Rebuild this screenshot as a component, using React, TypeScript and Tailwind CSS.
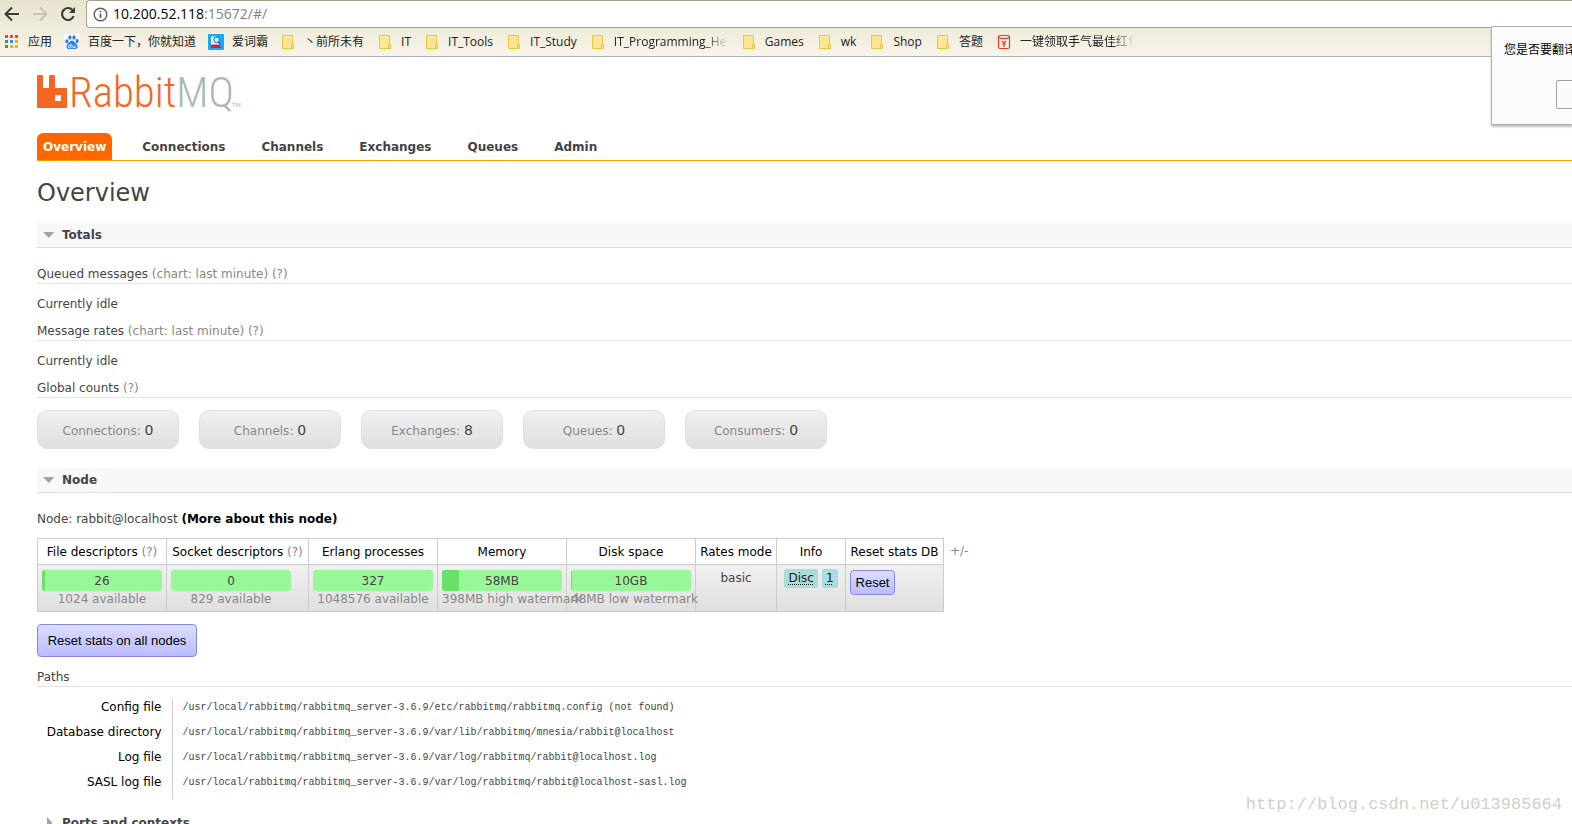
import React from 'react'

type IconKind = 'apps' | 'baidu' | 'iciba' | 'folder' | 'packet'

interface Bookmark {
  label: string
  icon: IconKind
  faded?: boolean
}

const bookmarks: Bookmark[] = [
  { label: '应用', icon: 'apps' },
  { label: '百度一下，你就知道', icon: 'baidu' },
  { label: '爱词霸', icon: 'iciba' },
  { label: '丶前所未有', icon: 'folder' },
  { label: 'IT', icon: 'folder' },
  { label: 'IT_Tools', icon: 'folder' },
  { label: 'IT_Study', icon: 'folder' },
  { label: 'IT_Programming_He', icon: 'folder', faded: true },
  { label: 'Games', icon: 'folder' },
  { label: 'wk', icon: 'folder' },
  { label: 'Shop', icon: 'folder' },
  { label: '答题', icon: 'folder' },
  { label: '一键领取手气最佳红包', icon: 'packet', faded: true }
]

const tabs = ['Overview', 'Connections', 'Channels', 'Exchanges', 'Queues', 'Admin']

const counts = [
  { label: 'Connections', value: 0 },
  { label: 'Channels', value: 0 },
  { label: 'Exchanges', value: 8 },
  { label: 'Queues', value: 0 },
  { label: 'Consumers', value: 0 }
]

const nodeStats = [
  { value: '26', note: '1024 available', used: 2.5 },
  { value: '0', note: '829 available', used: 0 },
  { value: '327', note: '1048576 available', used: 0 },
  { value: '58MB', note: '398MB high watermark', used: 14 },
  { value: '10GB', note: '48MB low watermark', used: 0.6 }
]

const paths = [
  { name: 'Config file', path: '/usr/local/rabbitmq/rabbitmq_server-3.6.9/etc/rabbitmq/rabbitmq.config (not found)' },
  { name: 'Database directory', path: '/usr/local/rabbitmq/rabbitmq_server-3.6.9/var/lib/rabbitmq/mnesia/rabbit@localhost' },
  { name: 'Log file', path: '/usr/local/rabbitmq/rabbitmq_server-3.6.9/var/log/rabbitmq/rabbit@localhost.log' },
  { name: 'SASL log file', path: '/usr/local/rabbitmq/rabbitmq_server-3.6.9/var/log/rabbitmq/rabbit@localhost-sasl.log' }
]

const appColors = ['#e8453c', '#e8453c', '#e8453c', '#2e9e5b', '#2f8cf0', '#f5b400', '#2e9e5b', '#f5b400', '#f5b400']

const BookmarkIcon = ({ kind }: { kind: IconKind }) => {
  switch (kind) {
    case 'apps':
      return (
        <svg width="16" height="16" viewBox="0 0 16 16" className="shrink-0">
          {appColors.map((color, i) => (
            <rect key={i} x={1 + (i % 3) * 5} y={1 + Math.floor(i / 3) * 5} width="3" height="3" fill={color} />
          ))}
        </svg>
      )
    case 'baidu':
      return (
        <svg width="16" height="16" viewBox="0 0 16 16" className="shrink-0 bg-white" fill="#2f7de1">
          <ellipse cx="2.9" cy="7.3" rx="1.6" ry="2.1" />
          <ellipse cx="5.9" cy="3.5" rx="1.6" ry="2.2" />
          <ellipse cx="10" cy="3.5" rx="1.6" ry="2.2" />
          <ellipse cx="13.1" cy="7.1" rx="1.6" ry="2.1" />
          <path d="M8 6.6c1.8 0 2.4 1.6 3.6 2.7 1.2 1 2.3 2 2 3.8-.3 2-2 2.4-3.4 2.1-1.5-.2-2.9-.2-4.4 0-1.5.3-3.1-.1-3.4-2.1-.3-1.7.8-2.8 2-3.8C5.6 8.2 6.2 6.6 8 6.6z" />
          <path d="M7 9.600v4.200H5.400a1.200 1.200 0 010-2.500H7M8.900 11.300v2.300h2.300v-2.300" fill="none" stroke="#fff" strokeWidth=".9" />
        </svg>
      )
    case 'iciba':
      return (
        <svg width="16" height="16" viewBox="0 0 16 16" className="shrink-0">
          <rect width="16" height="16" rx="1" fill="#16aaf0" />
          <path d="M3 2.500h5l3 5.500v4H3z" fill="#fff" />
          <path d="M3.500 10.500h7l3 3.500H4c-1.200 0-1.800-2.500-.5-3.500z" fill="#e8123c" />
          <circle cx="8.600" cy="5.800" r="2.700" fill="#e4f4fd" stroke="#1a8fe8" strokeWidth="1.200" />
          <path d="M10.200 8l2 2.500" stroke="#1a6fe0" strokeWidth="1.500" />
        </svg>
      )
    case 'packet':
      return (
        <svg width="16" height="16" viewBox="0 0 16 16" className="shrink-0" fill="none" stroke="#e23e2b" strokeWidth="1.200">
          <rect x="2.500" y="1.500" width="11" height="13" rx="1.500" />
          <path d="M2.500 3.200c3 2 8 2 11 0" />
          <path d="M6 7l2 2 2-2M8 9v4M6 10h4" />
        </svg>
      )
    default:
      return (
        <svg width="16" height="16" viewBox="0 0 16 16" className="shrink-0" fill="#ffe694" stroke="#e9c446">
          <path d="M2.500 1.500h10v13h-10z" />
          <path d="M11.500 14.500v-4h2v4z" />
        </svg>
      )
  }
}

const BrowserBar = () => (
  <header className="border-b border-[#b0b0b0] bg-linear-to-b from-[#e7e3cd] to-[#f7f4e8] font-['Open_Sans','Noto_Sans_CJK_SC',sans-serif]">
    <div className="flex h-7 items-center">
      <button className="pl-1" aria-label="Back">
        <svg width="16" height="16" viewBox="0 0 16 16" fill="none" stroke="#3c3c3c" strokeWidth="2">
          <path d="M15 8H2.500M8 1.500L1.500 8 8 14.500" />
        </svg>
      </button>
      <button className="pl-3" aria-label="Forward">
        <svg width="16" height="16" viewBox="0 0 16 16" fill="none" stroke="#c6c3b3" strokeWidth="2">
          <path d="M1 8h12.500M8 1.500L14.500 8 8 14.500" />
        </svg>
      </button>
      <button className="pl-3" aria-label="Reload">
        <svg width="16" height="16" viewBox="0 0 16 16" fill="none" stroke="#3c3c3c" strokeWidth="2.200">
          <path d="M13.600 10.200A6 6 0 1 1 12.500 4" />
          <path d="M15 1v6H9z" fill="#3c3c3c" stroke="none" />
        </svg>
      </button>
      <div className="ml-[10px] flex h-7 flex-1 items-center gap-[5px] rounded-l-sm border border-r-0 border-[#a3a08e] bg-white pl-[6px]">
        <svg width="15" height="15" viewBox="0 0 15 15" fill="none" stroke="#5c5c5c" strokeWidth="1.400">
          <circle cx="7.500" cy="7.500" r="6.300" />
          <path d="M7.500 6.500v4.500M7.500 3.800v1.500" strokeWidth="1.700" />
        </svg>
        <span className="text-sm leading-5 text-black">
          10.200.52.118<span className="text-[#808080]">:15672/#/</span>
        </span>
      </div>
    </div>
    <nav className="flex h-7 items-center gap-3 pl-1 text-xs text-[#222]">
      {bookmarks.map((item) => (
        <a
          key={item.label}
          href="#"
          className={`flex items-center gap-2 whitespace-nowrap ${item.icon === 'folder' ? 'pr-px' : ''}`}
        >
          <BookmarkIcon kind={item.icon} />
          <span
            className={
              item.faded
                ? 'w-[114px] overflow-hidden mask-r-from-80% mask-r-to-100%'
                : ''
            }
          >
            {item.label}
          </span>
        </a>
      ))}
    </nav>
  </header>
)

// Всплывающее окно перевода, обрезанное краем окна
const TranslatePopup = () => (
  <div className="absolute top-[26px] right-0 h-[99px] w-[81px] overflow-hidden rounded-l-xs border border-r-0 border-[#b0b0b0] bg-[#fbfbfb] shadow-[0_2px_2px_rgba(0,0,0,0.25)]">
    <p className="pt-[14px] pl-3 text-xs leading-4 whitespace-nowrap text-black font-['Noto_Sans_CJK_SC',sans-serif]">您是否要翻译</p>
    <button aria-label="翻译" className="mt-[23px] ml-16 block h-[29px] w-20 rounded-xs border border-[#a0a0a0] bg-[#fafafa]" />
  </div>
)

const Logo = () => (
  <a href="#" aria-label="RabbitMQ" className="block">
    <svg width="206" height="40" viewBox="0 0 206 40" className="block overflow-visible">
      <path
        fill="#f46722"
        fillRule="evenodd"
        d="M1 2h4a1 1 0 011 1v11a1 1 0 001 1h4a1 1 0 001-1V3a1 1 0 011-1h4a1 1 0 011 1v11a1 1 0 001 1h10a1 1 0 011 1v18a1 1 0 01-1 1H1a1 1 0 01-1-1V3a1 1 0 011-1zM19 22h4a1 1 0 011 1v4a1 1 0 01-1 1h-4a1 1 0 01-1-1v-4a1 1 0 011-1z"
      />
      <text x="32" y="34" fontSize="43" fill="#f46722" className="font-['Roboto_Condensed','Liberation_Sans_Narrow','Open_Sans',sans-serif] font-light">
        Rabbit<tspan fill="#a9b8b1">MQ</tspan>
      </text>
      <text x="195" y="34" fontSize="6" fill="#a9b8b1" className="font-['Liberation_Sans',sans-serif]">
        TM
      </text>
    </svg>
  </a>
)

interface SectionTitleProps {
  title: string
  closed?: boolean
}

const SectionTitle = ({ title, closed }: SectionTitleProps) => (
  <h2
    className={`flex h-[26px] items-center border-b pl-[6px] text-xs font-bold ${
      closed ? 'border-transparent' : 'border-[#ddd] bg-[#f8f8f8]'
    }`}
  >
    <svg width="12" height="12" viewBox="0 0 12 12" className="mr-[7px]" fill="#a4a4a4">
      {closed ? <path d="M4 0l5.500 6L4 12z" /> : <path d="M0 3h11.500l-5.750 6z" />}
    </svg>
    {title}
  </h2>
)

interface SubTitleProps {
  title: string
  chart?: boolean
  help?: boolean
}

const SubTitle = ({ title, chart, help }: SubTitleProps) => (
  <h3 className="border-b border-[#e4e4e4] pt-[2px] leading-[18px]">
    {title}
    {chart && <span className="text-[#888]"> (chart: last minute)</span>}
    {help && <span className="text-[#888]"> (?)</span>}
  </h3>
)

const NodeTable = () => (
  <table className="w-[907px] table-fixed border-collapse text-center">
    <colgroup>
      <col className="w-[129px]" />
      <col className="w-[142px]" />
      <col className="w-[129px]" />
      <col className="w-[129px]" />
      <col className="w-[129px]" />
      <col className="w-[81px]" />
      <col className="w-[69px]" />
      <col />
    </colgroup>
    <thead>
      <tr className="h-[26px] whitespace-nowrap text-black [&>th]:border [&>th]:border-[#ccc] [&>th]:font-normal">
        <th>File descriptors <span className="text-[#888]">(?)</span></th>
        <th>Socket descriptors <span className="text-[#888]">(?)</span></th>
        <th>Erlang processes</th>
        <th>Memory</th>
        <th>Disk space</th>
        <th>Rates mode</th>
        <th>Info</th>
        <th>Reset stats DB</th>
      </tr>
    </thead>
    <tbody>
      <tr className="h-[47px] bg-linear-to-b from-[#f0f0f0] to-[#dfdfdf] align-top [&>td]:border [&>td]:border-[#ccc] [&>td]:px-1">
        {nodeStats.map((stat) => (
          <td key={stat.note}>
            <div className="mt-[5px] w-[120px] whitespace-nowrap">
              <div className="relative h-[21px] overflow-hidden rounded-[3px] bg-[#98f898] leading-[22px]">
                <div className="absolute inset-y-0 left-0 bg-[#69e069]" style={{ width: `${stat.used}%` }} />
                <span className="relative">{stat.value}</span>
              </div>
              <div className="leading-4 text-[#888]">{stat.note}</div>
            </div>
          </td>
        ))}
        <td className="pt-[5px] leading-4">basic</td>
        <td className="pt-1">
          <div className="flex justify-center gap-1 leading-[19px] text-[#222]">
            <abbr className="rounded-xs bg-[#a9dddd] px-1 underline decoration-dotted underline-offset-2">Disc</abbr>
            <abbr className="rounded-xs bg-[#a9dddd] px-1 underline decoration-dotted underline-offset-2">1</abbr>
          </div>
        </td>
        <td className="text-left">
          <button className="mt-[5px] h-[25px] w-[45px] rounded-[4px] border border-[#88d] bg-linear-to-b from-[#ddf] to-[#bbf] text-[13px] leading-4 text-black font-['Liberation_Sans',sans-serif]">
            Reset
          </button>
        </td>
      </tr>
    </tbody>
  </table>
)

const App: React.FC = () => (
  <div className="relative h-screen overflow-hidden bg-white font-['DejaVu_Sans',Verdana,sans-serif] text-xs text-[#444]">
    <BrowserBar />

    <div className="pl-[37px]">
      <div className="pt-4">
        <Logo />
      </div>

      <nav className="mt-5 flex h-7 gap-6 border-b border-[#f90] font-bold leading-7">
        {tabs.map((tab) => (
          <a
            key={tab}
            href="#"
            className={tab === 'Overview' ? 'rounded-t-md bg-[#f60] px-[6px] text-white' : 'px-[6px]'}
          >
            {tab}
          </a>
        ))}
      </nav>

      <main>
        <h1 className="pt-4 pb-[13px] text-2xl leading-8">Overview</h1>

        <section>
          <SectionTitle title="Totals" />
          <div className="pt-[15px]">
            <SubTitle title="Queued messages" chart help />
            <p className="py-3 leading-4">Currently idle</p>
          </div>
          <div className="-mt-1">
            <SubTitle title="Message rates" chart help />
            <p className="py-3 leading-4">Currently idle</p>
          </div>
          <div className="-mt-1">
            <SubTitle title="Global counts" help />
            <div className="flex gap-5 pt-3 pb-[18px]">
              {counts.map((item) => (
                <div
                  key={item.label}
                  className="h-[39px] w-[142px] rounded-[10px] border border-[#e0e0e0] bg-linear-to-b from-[#f0f0f0] to-[#dfdfdf] text-center leading-10 text-[#888]"
                >
                  {item.label}: <strong className="text-sm leading-4 font-normal text-[#444]">{item.value}</strong>
                </div>
              ))}
            </div>
          </div>
        </section>

        <section>
          <SectionTitle title="Node" />
          <p className="pt-[18px] pb-[11px] leading-4">
            Node: rabbit@localhost{' '}
            <a href="#" className="font-bold text-black">(More about this node)</a>
          </p>
          <div className="flex gap-[6px]">
            <NodeTable />
            <a href="#" className="pt-[5px] leading-4 text-[#888]">+/-</a>
          </div>
          <button className="mt-3 block h-[33px] w-40 rounded-[4px] border border-[#88d] bg-linear-to-b from-[#ddf] to-[#bbf] text-[13px] text-black font-['Liberation_Sans',sans-serif]">
            Reset stats on all nodes
          </button>

          <div className="pt-[9px]">
            <SubTitle title="Paths" />
          </div>
          <table className="mt-3 mb-[11px] border-collapse">
            <tbody>
              {paths.map((row) => (
                <tr key={row.name} className="h-[25px] align-top">
                  <th scope="row" className="w-[135px] border-r border-[#ccc] pr-[10px] text-right font-normal leading-4 text-black">
                    {row.name}
                  </th>
                  <td className="pl-[10px] text-[10px] leading-[18px] font-['Liberation_Mono',monospace]">{row.path}</td>
                </tr>
              ))}
            </tbody>
          </table>
        </section>

        <section>
          <SectionTitle title="Ports and contexts" closed />
        </section>
      </main>
    </div>

    <TranslatePopup />
    <div className="absolute right-[10px] bottom-[7px] text-[17px] leading-6 text-[#d0d0c8] font-['Liberation_Mono',monospace]">
      http://blog.csdn.net/u013985664
    </div>
  </div>
)

export default App
